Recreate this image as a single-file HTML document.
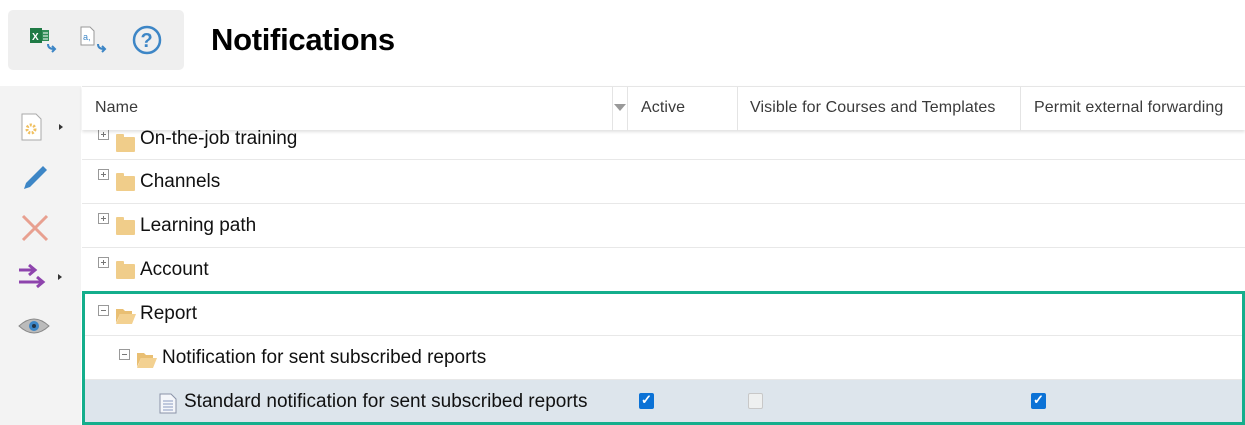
<!DOCTYPE html>
<html><head><meta charset="utf-8"><style>
*{margin:0;padding:0;box-sizing:border-box}
body{width:1245px;height:425px;overflow:hidden;background:#fff;font-family:"Liberation Sans",Arial,sans-serif;position:relative}
.abs{position:absolute}
.tb{left:8px;top:10px;width:176px;height:60px;background:#efefef;border-radius:5px}
h1{position:absolute;left:211px;top:22px;font-size:31px;font-weight:bold;color:#000;letter-spacing:-0.3px}
.side{left:0;top:86px;width:81px;height:339px;background:#f3f3f3}
.hdr{left:82px;top:86px;width:1163px;height:44px;background:#fff;border-top:1px solid #e6e6e6;box-shadow:0 2px 3px rgba(0,0,0,.12);z-index:2}
.hdr span{position:absolute;top:12px;font-size:16px;color:#3a3a3a;letter-spacing:0.1px}
.vl{position:absolute;top:0;width:1px;height:44px;background:#e4e4e4}
.row{position:absolute;left:82px;width:1163px;height:44px;border-bottom:1px solid #e8e8e8}
.row .t{position:absolute;font-size:19px;color:#111;top:11px}
.pm{position:absolute;width:11px;height:11px;border:1px solid #999;top:9px;background:#fff}
.pm:before{content:"";position:absolute;left:2px;top:4px;width:5px;height:1px;background:#777}
.pm.p:after{content:"";position:absolute;left:4px;top:2px;width:1px;height:5px;background:#777}
.fold{position:absolute;width:19px;height:15px;background:#f0cd8a;top:16px;border-radius:1px}
.fold:before{content:"";position:absolute;left:0;top:-3px;width:8px;height:4px;background:#f0cd8a;border-radius:1px 1px 0 0}
.cb{position:absolute;width:15px;height:16px;border-radius:2px;top:13px}
.cb.on{background:#0b72d6}
.cb.on:after{content:"✓";position:absolute;left:2px;top:-1px;color:#fff;font-size:13px;font-weight:bold}
.cb.off{background:#eef0f0;border:1px solid #c8c8c8}
</style></head><body>
<div class="abs tb"></div>
<svg class="abs" style="left:28px;top:25px" width="34" height="30" viewBox="0 0 34 30">
<rect x="2" y="3" width="12" height="15" fill="#1f7a45"/><text x="4" y="15" font-size="10" fill="#fff" font-family="Liberation Sans" font-weight="bold">X</text>
<rect x="14" y="5" width="7" height="11" fill="#2e8b57"/><path d="M15 8h5M15 11h5M15 14h5" stroke="#fff" stroke-width="1"/>
<path d="M20 19q0 5 6 5" stroke="#3d86c6" stroke-width="2" fill="none"/><path d="M24 21l3 3-3 3" stroke="#3d86c6" stroke-width="2" fill="none"/>
</svg>
<svg class="abs" style="left:78px;top:25px" width="36" height="30" viewBox="0 0 36 30">
<path d="M3 2h9l4 4v14H3z" fill="#fff" stroke="#999"/><text x="5" y="15" font-size="9" fill="#3d86c6" font-family="Liberation Sans">a,</text>
<path d="M20 19q0 5 6 5" stroke="#3d86c6" stroke-width="2" fill="none"/><path d="M24 21l3 3-3 3" stroke="#3d86c6" stroke-width="2" fill="none"/>
</svg>
<svg class="abs" style="left:131px;top:25px" width="32" height="32" viewBox="0 0 32 32">
<circle cx="16" cy="15" r="13" fill="none" stroke="#3d86c6" stroke-width="2.5"/><text x="9.5" y="22" font-size="20" font-weight="bold" fill="#3d86c6" font-family="Liberation Sans">?</text>
</svg>
<h1>Notifications</h1>
<div class="abs side"></div>
<svg class="abs" style="left:20px;top:112px" width="50" height="30"><path d="M2 2h14l5 5v21H2z" fill="#fff" stroke="#aaa"/><circle cx="11" cy="17" r="4" fill="none" stroke="#f0c060" stroke-width="3" stroke-dasharray="2 1.5"/><path d="M39 12l4 3-4 3z" fill="#333"/></svg>
<svg class="abs" style="left:20px;top:163px" width="30" height="30"><path d="M4 26l2-6 17-17 4 4-17 17z" fill="#3d86c6"/></svg>
<svg class="abs" style="left:20px;top:213px" width="30" height="30"><path d="M3 3l24 24M27 3L3 27" stroke="#e8a090" stroke-width="3"/></svg>
<svg class="abs" style="left:16px;top:262px" width="50" height="30"><path d="M3 8h16M13 3l6 5-6 5M3 20h24M21 15l6 5-6 5" stroke="#8e44ad" stroke-width="3" fill="none"/><path d="M42 12l4 3-4 3z" fill="#333"/></svg>
<svg class="abs" style="left:18px;top:316px" width="34" height="20"><path d="M1 10q15-14 30 0q-15 14-30 0z" fill="#bbb" stroke="#888"/><circle cx="16" cy="10" r="5" fill="#3d86c6"/><circle cx="16" cy="10" r="2" fill="#234"/></svg>

<div class="abs hdr">
<span style="left:13px">Name</span>
<div class="vl" style="left:530px"></div>
<svg style="position:absolute;left:532px;top:17px" width="12" height="8"><path d="M0 0h12L6 7z" fill="#999"/></svg>
<div class="vl" style="left:545px"></div>
<span style="left:559px">Active</span>
<div class="vl" style="left:655px"></div>
<span style="left:668px">Visible for Courses and Templates</span>
<div class="vl" style="left:938px"></div>
<span style="left:952px">Permit external forwarding</span>
</div>

<div class="row" style="top:116px"><div class="pm p" style="left:16px;top:13px"></div><div class="fold" style="left:34px;top:21px"></div><span class="t" style="left:58px;top:12px">On-the-job training</span></div>
<div class="row" style="top:160px"><div class="pm p" style="left:16px"></div><div class="fold" style="left:34px"></div><span class="t" style="left:58px">Channels</span></div>
<div class="row" style="top:204px"><div class="pm p" style="left:16px"></div><div class="fold" style="left:34px"></div><span class="t" style="left:58px">Learning path</span></div>
<div class="row" style="top:248px"><div class="pm p" style="left:16px"></div><div class="fold" style="left:34px"></div><span class="t" style="left:58px">Account</span></div>
<div class="row" style="top:292px"><div class="pm" style="left:16px;top:13px"></div>
<svg style="position:absolute;left:33px;top:13px" width="22" height="20"><path d="M1 4h7l2 2h7v3H5L1 18z" fill="#e9bf73"/><path d="M5 9h16l-4 10H1z" fill="#f3d191"/></svg>
<span class="t" style="left:58px">Report</span></div>
<div class="row" style="top:336px"><div class="pm" style="left:37px;top:13px"></div>
<svg style="position:absolute;left:54px;top:13px" width="22" height="20"><path d="M1 4h7l2 2h7v3H5L1 18z" fill="#e9bf73"/><path d="M5 9h16l-4 10H1z" fill="#f3d191"/></svg>
<span class="t" style="left:80px">Notification for sent subscribed reports</span></div>
<div class="row" style="top:380px;background:#dde5ec;border:none">
<svg style="position:absolute;left:77px;top:13px" width="18" height="21"><path d="M1 1h11l5 5v14H1z" fill="#f4f6fa" stroke="#8a93a8"/><path d="M4 8h10M4 11h10M4 14h10M4 17h10" stroke="#8a9ac0"/></svg>
<span class="t" style="left:102px">Standard notification for sent subscribed reports</span>
<div class="cb on" style="left:557px"></div>
<div class="cb off" style="left:666px"></div>
<div class="cb on" style="left:949px"></div>
</div>
<div class="abs" style="left:82px;top:291px;width:1163px;height:134px;border:3px solid #14ae8c"></div>
</body></html>
